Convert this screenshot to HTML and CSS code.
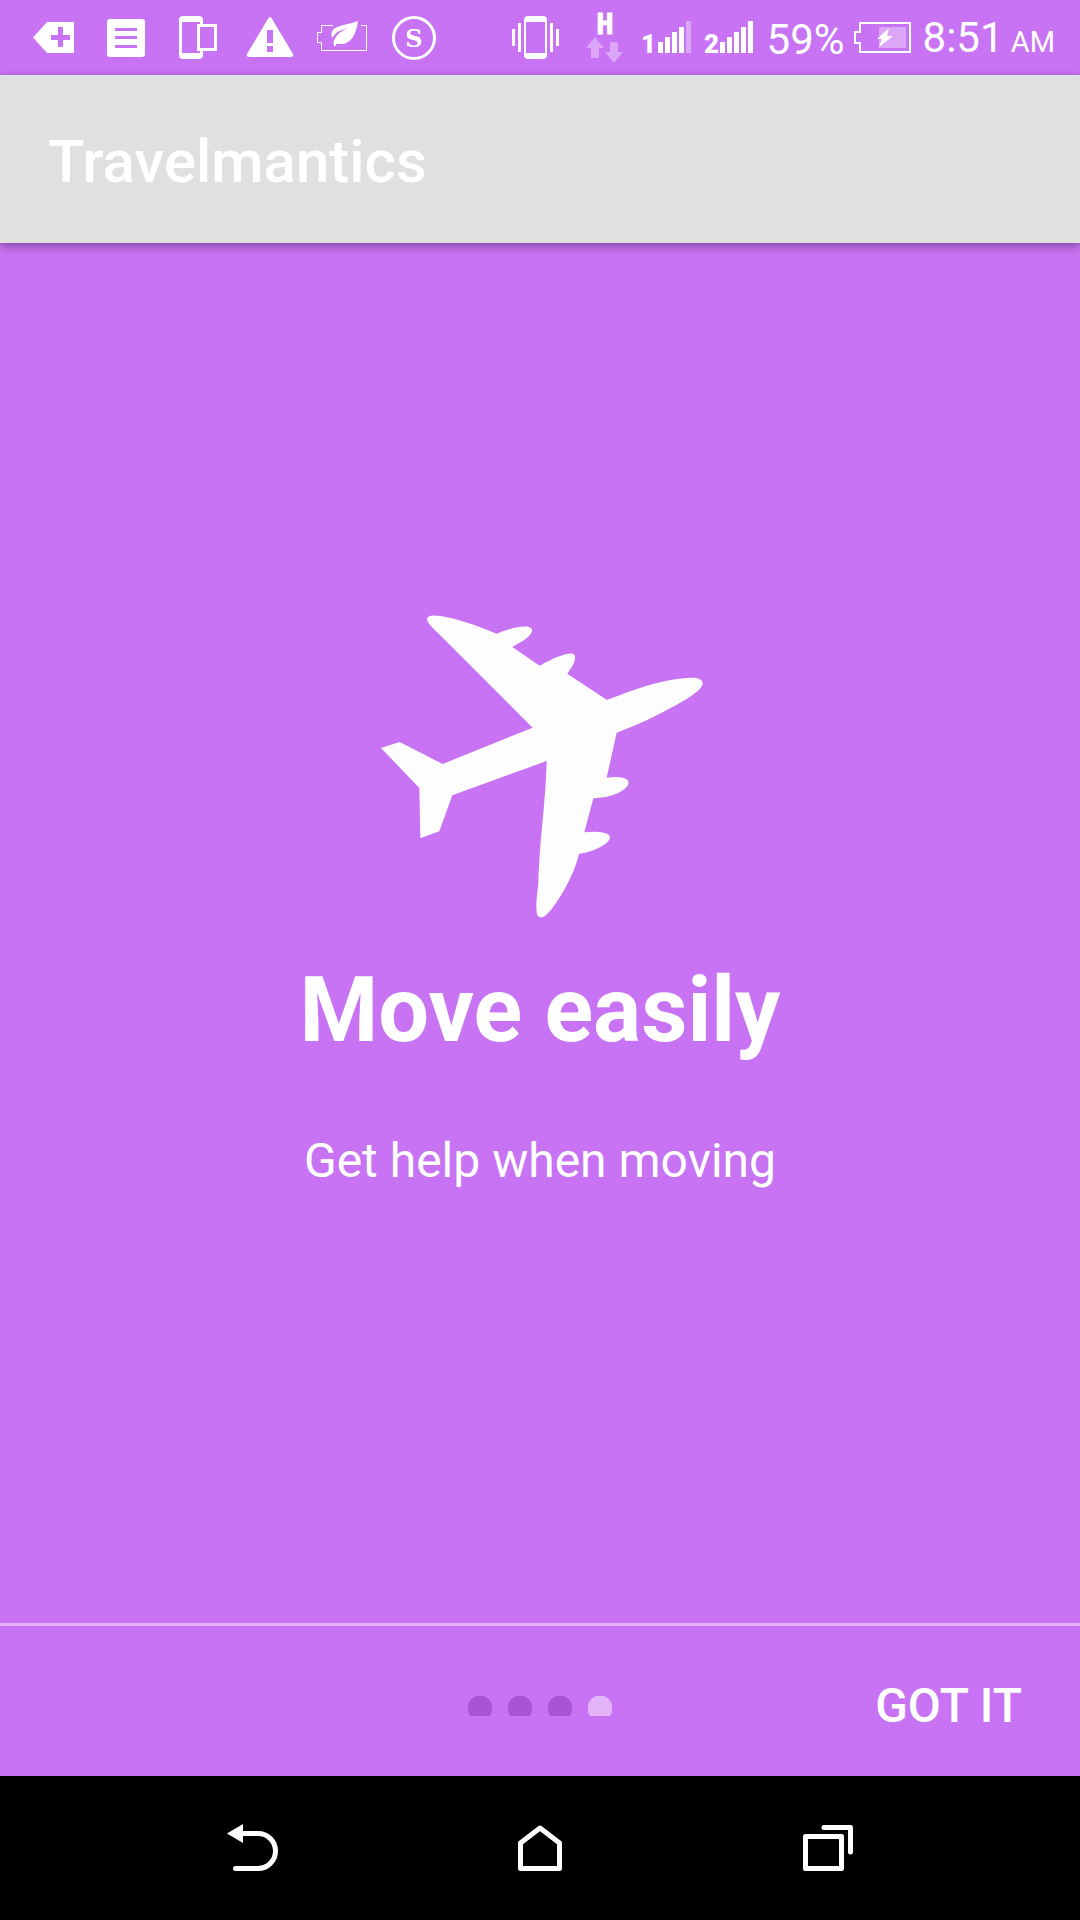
FILE: index.html
```html
<!DOCTYPE html>
<html lang="en">
<head>
  <meta charset="utf-8">
  <meta name="viewport" content="width=device-width, initial-scale=1">
  <title>Travelmantics</title>
  <link rel="stylesheet" href="styles.css">
</head>
<body>
<div class="screen">
  <div class="status">
    <div class="status-group">
      <svg class="icon" width="72" height="75" viewBox="0 0 72 75" aria-hidden="true">
        <path fill-rule="evenodd" d="M15 37.5 29 22H56V53H29ZM40 27V35H33V40H40V47H45V40H52V35H45V27Z"/>
      </svg>
      <svg class="icon" width="72" height="75" viewBox="0 0 72 75" aria-hidden="true">
        <path fill-rule="evenodd" d="M20 19H52Q55 19 55 22V54Q55 57 52 57H20Q17 57 17 54V22Q17 19 20 19ZM25 28V31H47V28ZM25 36V39H47V36ZM25 45V48H47V45Z"/>
      </svg>
      <svg class="icon" width="72" height="75" viewBox="0 0 72 75" aria-hidden="true">
        <path fill-rule="evenodd" d="M21 16H37Q41 16 41 20V24H55V51H41V55Q41 59 37 59H21Q17 59 17 55V20Q17 16 21 16ZM20 22V53H38V51H35V24H38V22ZM38 27V48H52V27Z"/>
      </svg>
      <svg class="icon" width="72" height="75" viewBox="0 0 72 75" aria-hidden="true">
        <path fill-rule="evenodd" d="M34.500 18Q36 16 37.500 18L59 54Q60 57 57 57H15Q12 57 13 54ZM33 30V43H39V30ZM33 46V52H39V46Z"/>
      </svg>
      <svg class="icon" width="72" height="75" viewBox="0 0 72 75" aria-hidden="true">
        <path class="line thin" d="M27 25.500H15.500V32.500H11.500V42.500H15.500V50.500H60.500V25.500H55"/>
        <path d="M52 21C50 36 44 45 33 44Q29 43 30 46H28Q27 43 28 40Q33 31 42 28Q31 30 26 38C22 24 41 26 52 21Z"/>
      </svg>
      <svg class="icon" width="72" height="75" viewBox="0 0 72 75" aria-hidden="true">
        <circle class="line" cx="36" cy="38" r="20.500"/>
        <text class="badge-letter" x="36" y="47">S</text>
      </svg>
    </div>
    <div class="status-group">
      <svg class="icon" width="72" height="75" viewBox="0 0 72 75" aria-hidden="true">
        <path fill-rule="evenodd" d="M29 16H44Q48 16 48 20V55Q48 59 44 59H29Q25 59 25 55V20Q25 16 29 16ZM27 22V53H46V22Z"/>
        <path d="M13 29h3v17h-3zM19 23h3v29h-3zM51 23h3v29h-3zM57 29h3v17h-3z"/>
      </svg>
      <svg class="icon" width="70" height="75" viewBox="0 0 70 75" aria-hidden="true">
        <text class="network" x="34" y="34">H</text>
        <path class="faded" d="M24 37 33 48H28V58H20V48H15ZM39 42H47V52H52L43 63 34 52H39Z"/>
      </svg>
      <svg class="icon" width="63" height="75" viewBox="0 0 63 75" aria-hidden="true">
        <text class="sim" x="15" y="53">1</text>
        <path d="M17 42h5v11h-5zM24 37h5v16h-5zM31 32h5v21h-5zM38 27h5v26h-5z"/>
        <path class="faded" d="M45 21h5v32h-5z"/>
      </svg>
      <svg class="icon" width="63" height="75" viewBox="0 0 63 75" aria-hidden="true">
        <text class="sim" x="15" y="53">2</text>
        <path d="M16 42h5v11h-5zM23 37h5v16h-5zM30 32h5v21h-5zM37 27h5v26h-5zM44 21h5v32h-5z"/>
      </svg>
      <span class="status-text">59%</span>
      <svg class="icon" width="78" height="75" viewBox="0 0 78 75" aria-hidden="true">
        <path class="faded" d="M34 27h27v21H34z"/>
        <path class="line battery" d="M15 23H65V52H15V43H10V32H15Z"/>
        <path d="M44 28 32 39H37L34 47 48 36H42Z"/>
      </svg>
      <span class="status-text">8:51<small class="meridiem"> AM</small></span>
    </div>
  </div>

  <header class="app-bar">
    <h1 class="app-title">Travelmantics</h1>
  </header>

  <main class="slide">
    <svg class="plane" width="360" height="340" viewBox="0 0 1080 1020" aria-hidden="true">
      <path d="M202 92C198 76 215 74 243 78C290 86 345 104 410 131C450 114 488 106 508 111C520 116 518 125 508 137C496 150 478 158 457 171L539 227C580 204 618 189 638 191C650 195 645 212 639 225L622 251L741 330C820 299 900 270 980 264C1012 262 1028 266 1028 282C1024 300 990 322 950 344C890 378 830 405 770 428L740 563C768 559 793 561 803 571C812 584 795 599 775 609C750 620 725 624 700 625L673 727C705 723 735 725 747 735C758 748 735 764 715 774C695 784 678 789 657 791C648 830 630 870 607 909C590 938 572 964 555 978C545 985 534 983 531 972C526 948 531 915 535 883C536 830 541 760 550 670C556 600 559 560 560 513L277 616L238 724L181 745L178 594L63 474L119 456L248 522L518 413L237 132Q208 106 202 92Z"/>
    </svg>
    <h2 class="slide-title">Move easily</h2>
    <p class="slide-text">Get help when moving</p>
  </main>

  <footer class="pager">
    <ol class="dots" aria-label="Step 4 of 4">
      <li class="dot"></li>
      <li class="dot"></li>
      <li class="dot"></li>
      <li class="dot current"></li>
    </ol>
    <button class="done" type="button">GOT IT</button>
  </footer>

  <nav class="system-nav" aria-label="System">
    <button class="nav-button" type="button" aria-label="Back">
      <svg class="icon" width="72" height="72" viewBox="0 0 72 72" aria-hidden="true">
        <path d="M11 21.500 27 12V31Z"/>
        <path class="line thick" d="M26 21.500H42a17.500 17.500 0 0 1 0 35H19.500"/>
      </svg>
    </button>
    <button class="nav-button" type="button" aria-label="Home">
      <svg class="icon" width="72" height="72" viewBox="0 0 72 72" aria-hidden="true">
        <path class="line thick" d="M36 16 55.500 31V56.500H16.500V31Z"/>
      </svg>
    </button>
    <button class="nav-button" type="button" aria-label="Recent apps">
      <svg class="icon" width="72" height="72" viewBox="0 0 72 72" aria-hidden="true">
        <path class="line thick" d="M13.500 24.500H49.500V56.500H13.500ZM32 15.500H58.500V40"/>
      </svg>
    </button>
  </nav>
</div>
</body>
</html>
```

FILE: styles.css
```css
* {
  box-sizing: border-box;
}

body {
  margin: 0;
  background: #c873f4;
  color: #fff;
  font-family: Roboto, "Liberation Sans", sans-serif;
}

h1, h2, p, ol {
  margin: 0;
  padding: 0;
}

button {
  padding: 0;
  border: 0;
  background: none;
  color: inherit;
  font-family: inherit;
}

.screen {
  display: flex;
  flex-direction: column;
  min-height: 100vh;
}

.icon {
  display: block;
  flex: none;
  fill: #fff;
}

.line {
  fill: none;
  stroke: #fff;
  stroke-width: 3;
}

.thin {
  stroke-width: 1;
}

.battery {
  stroke-width: 2;
}

.thick {
  stroke-width: 5;
  stroke-linecap: round;
  stroke-linejoin: round;
}

.faded {
  fill: #dca5f8;
}

/* Status bar */
.status {
  display: flex;
  justify-content: space-between;
  padding: 0 25px 0 18px;
}

.status-group {
  display: flex;
  align-items: center;
}

.status-text {
  padding-top: 4px;
  font-size: 42px;
  line-height: 48px;
  white-space: nowrap;
}

.meridiem {
  font-size: 29px;
}

.badge-letter {
  font: bold 24px "DejaVu Serif", serif;
  text-anchor: middle;
}

.network {
  font: bold 29px "DejaVu Sans Mono", monospace;
  stroke: #fff;
  stroke-width: 1;
  text-anchor: middle;
}

.sim {
  font: 900 26px Roboto, sans-serif;
  text-anchor: end;
}

/* App bar */
.app-bar {
  position: relative;
  padding: 51px 48px 45px;
  background: #e0e0e0;
  box-shadow: 0 4px 10px rgba(0, 0, 0, 0.3), 0 0 3px rgba(0, 0, 0, 0.1);
}

.app-title {
  font-size: 60px;
  font-weight: 500;
  line-height: 72px;
}

/* Intro slide */
.slide {
  display: flex;
  flex: 1;
  flex-direction: column;
  align-items: center;
  justify-content: center;
  padding-bottom: 87px;
  text-align: center;
}

.plane {
  fill: #fdfdfd;
}

.slide-title {
  margin-top: 28px;
  font-size: 90px;
  font-weight: 700;
  line-height: 106px;
}

.slide-text {
  margin-top: 69px;
  font-size: 48px;
  line-height: 56px;
}

/* Pager */
.pager {
  display: grid;
  grid-template-columns: 1fr auto 1fr;
  align-items: center;
  padding: 52px 58px 42px;
  border-top: 3px solid #e3b4fa;
}

.dots {
  display: flex;
  grid-column: 2;
  gap: 16px;
  list-style: none;
}

.dot {
  width: 24px;
  height: 20px;
  background: radial-gradient(circle at 12px 12px, #a855d5 12px, transparent 13px);
}

.dot.current {
  background: radial-gradient(circle at 12px 12px, #e3b4fa 12px, transparent 13px);
}

.done {
  justify-self: end;
  font-size: 48px;
  font-weight: 500;
  line-height: 56px;
}

/* System navigation */
.system-nav {
  display: flex;
  padding: 36px 10%;
  background: #000;
}

.nav-button {
  display: flex;
  flex: 1;
  justify-content: center;
}
```
